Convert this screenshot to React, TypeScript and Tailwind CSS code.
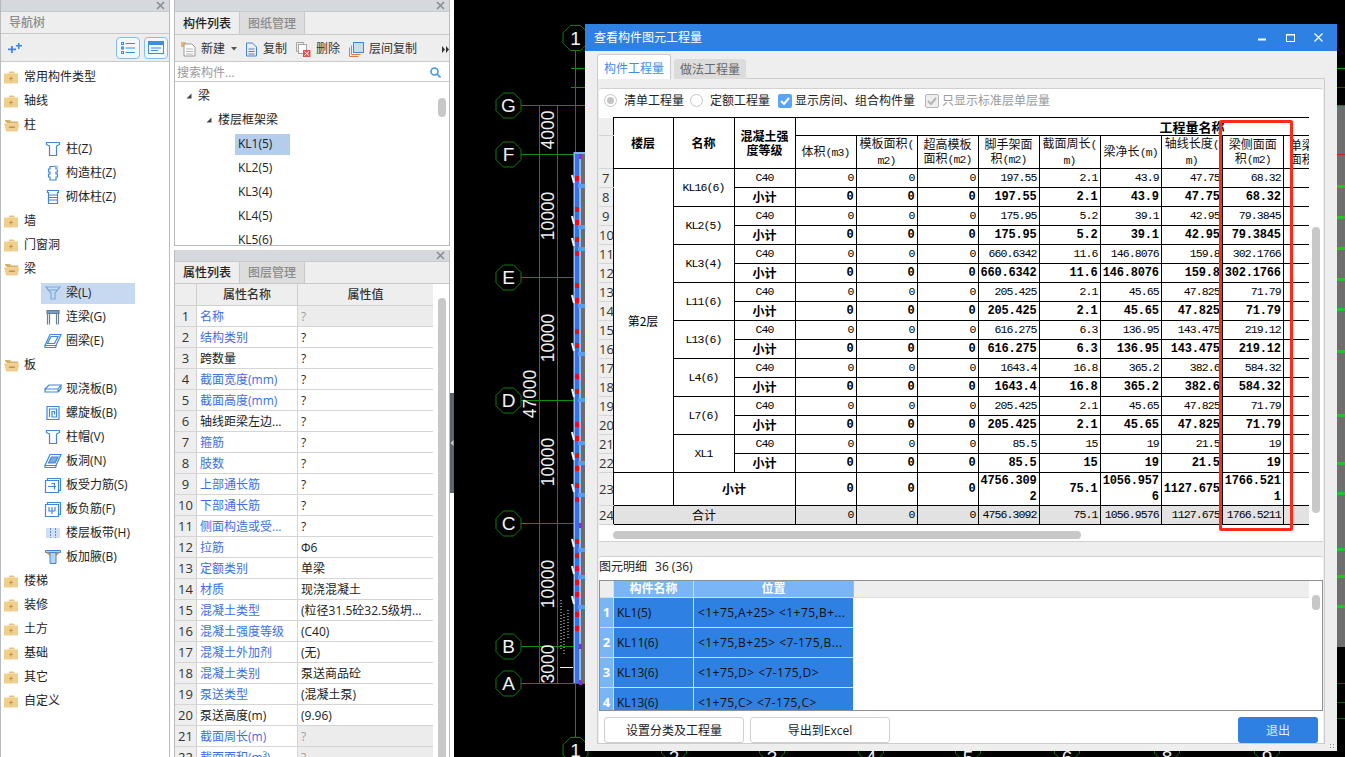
import React from "react";

const BLUE = "#3f86dc";

function Close() {
  return (
    <svg width="9" height="9" viewBox="0 0 9 9" className="shrink-0">
      <path d="M1 1L8 8M8 1L1 8" stroke="#8a8d91" strokeWidth="1.6" />
    </svg>
  );
}

function TitleStrip() {
  return (
    <div className="h-[12px] shrink-0 bg-[#d5d8dc] flex items-center justify-end pr-[4px] border-b border-[#c8cacd]">
      <Close />
    </div>
  );
}

function Folder({ open }: { open?: boolean }) {
  return open ? (
    <svg width="16" height="13" viewBox="0 0 16 13" className="shrink-0">
      <path d="M1 1h5l1 1.5h7v2H3L1 2z" fill="#d4b06a" />
      <path d="M0 4.5h15.5L13.5 12.5H2z" fill="#f0cf8c" />
      <rect x="5" y="7.5" width="6" height="1.4" fill="#b8924a" />
    </svg>
  ) : (
    <svg width="14" height="13" viewBox="0 0 14 13" className="shrink-0">
      <path d="M5 0.5h5l1 2H5z" fill="#e8c47e" />
      <rect x="0" y="2.5" width="14" height="10" fill="#f0cf8c" />
      <path d="M5 7.5h4M7 5.5v4" stroke="#c4984c" strokeWidth="1.2" />
    </svg>
  );
}

function Ico({ children }: { children: React.ReactNode }) {
  return (
    <svg width="18" height="16" viewBox="0 0 18 16" fill="none" stroke={BLUE} strokeWidth="1.2" className="shrink-0">
      {children}
    </svg>
  );
}

const TreeIcons: Record<string, React.ReactNode> = {
  column: (
    <Ico>
      <path d="M2.5 1.5h13v2l-3 1.5v9.5h-7V5l-3-1.5z" />
    </Ico>
  ),
  gz: (
    <Ico>
      <path d="M6 1.5h6v2.5h1.5v3H12v2h1.5v3H12v3H6v-3H4.5v-3H6v-2H4.5v-3H6z" />
      <path d="M10 1h3.5v4" stroke="#b5cdea" />
    </Ico>
  ),
  brick: (
    <Ico>
      <path d="M3.5 1.5h11v2h-1v11h-9v-11h-1z" />
      <path d="M5 6h8M5 8.5h8M5 11h8" />
    </Ico>
  ),
  beam: (
    <Ico>
      <path d="M2 2h14L11 8v6H7V8z" stroke="#7fa9dc" />
      <path d="M5 5h8" stroke="#7fa9dc" />
    </Ico>
  ),
  lintel: (
    <Ico>
      <path d="M3 1.5h12v3H3z" fill="#6f9ad0" stroke="#6e7f94" />
      <path d="M3.5 4.5v11M14.5 4.5v11M5.5 4.5v11M12.5 4.5v11" stroke="#6e7f94" />
    </Ico>
  ),
  ring: (
    <Ico>
      <path d="M6 1.5h11l-5 11H1z" />
      <path d="M1 12.5v2h10.5l1-2" />
      <path d="M7 3.5h7l-3.5 7H3.5z" />
    </Ico>
  ),
  slab: (
    <Ico>
      <path d="M1 8l4-4h12l-3 4H1zM1 8v3h13v-3M14 11l3-3.5V4" />
    </Ico>
  ),
  spiral: (
    <Ico>
      <path d="M3 1.5h12v13H3zM5.5 12V4H12.5v8H8V6.5h2.5v3" />
    </Ico>
  ),
  hole: (
    <Ico>
      <path d="M6 1.5h11l-5 11H1z" />
      <path d="M1 12.5v2h10.5l1-2" />
      <path d="M7.5 4h6.5l-3 6H4.5z" fill="#7fa9dc" />
    </Ico>
  ),
  rebar: (
    <Ico>
      <path d="M1.5 3.5h13v12h-13zM3.5 3.5v-2h13v12h-2" />
      <path d="M4 9.5h8M7.5 6.5h3v6" />
    </Ico>
  ),
  neg: (
    <Ico>
      <path d="M1.5 3.5h13v12h-13zM3.5 3.5v-2h13v12h-2" />
      <path d="M5 6v4h6M8 6v7M11 6v4" />
    </Ico>
  ),
  band: (
    <svg width="18" height="16" viewBox="0 0 18 16" className="shrink-0">
      <rect x="2" y="3" width="14" height="10" fill="#cfe0f4" />
      <path d="M6.5 3v10M11.5 3v10" stroke="#5d8fcf" strokeDasharray="2 1" />
    </svg>
  ),
  haunch: (
    <svg width="18" height="16" viewBox="0 0 18 16" className="shrink-0" fill="none">
      <path d="M1.5 1.5h15v2H1.5z" fill="#b9d2ee" stroke={BLUE} />
      <path d="M2 3.5h4L6 7z M16 3.5h-4L12 7z" fill="#f08a24" />
      <path d="M6 3.5h6v11H6z" fill="#b9d2ee" stroke={BLUE} />
    </svg>
  ),
};

type TreeRow = { t: string; open?: boolean; icon?: string; sel?: boolean };
const tree: TreeRow[] = [
  { t: "常用构件类型" },
  { t: "轴线" },
  { t: "柱", open: true },
  { t: "柱(Z)", icon: "column" },
  { t: "构造柱(Z)", icon: "gz" },
  { t: "砌体柱(Z)", icon: "brick" },
  { t: "墙" },
  { t: "门窗洞" },
  { t: "梁", open: true },
  { t: "梁(L)", icon: "beam", sel: true },
  { t: "连梁(G)", icon: "lintel" },
  { t: "圈梁(E)", icon: "ring" },
  { t: "板", open: true },
  { t: "现浇板(B)", icon: "slab" },
  { t: "螺旋板(B)", icon: "spiral" },
  { t: "柱帽(V)", icon: "column" },
  { t: "板洞(N)", icon: "hole" },
  { t: "板受力筋(S)", icon: "rebar" },
  { t: "板负筋(F)", icon: "neg" },
  { t: "楼层板带(H)", icon: "band" },
  { t: "板加腋(B)", icon: "haunch" },
  { t: "楼梯" },
  { t: "装修" },
  { t: "土方" },
  { t: "基础" },
  { t: "其它" },
  { t: "自定义" },
];

function NavPanel() {
  return (
    <div className="w-[170px] shrink-0 h-full flex flex-col border-x border-[#b9bbbe] bg-white">
      <TitleStrip />
      <div className="h-[22px] shrink-0 bg-[#eeeeee] border-b border-[#c9c9c9] pl-[8px] flex items-center text-[#8c8c8c] font-medium">导航树</div>
      <div className="h-[28px] shrink-0 bg-[#eeeeee] border-b border-[#c9c9c9] flex items-center pl-[7px] pr-[1px]">
        <svg width="14" height="11" viewBox="0 0 14 11" fill={BLUE}>
          <path d="M0 6.5h3V4h1.8v2.5H8v1.8H4.8V11H3V8.3H0z" />
          <path d="M8 3h2V1h1.5v2H14v1.5h-2.5V7H10V4.5H8z" />
        </svg>
        <div className="flex-1" />
        <div className="w-[24px] h-[22px] rounded-[4px] border border-[#7fbdf2] bg-[#f2f8fe] flex items-center justify-center mr-[4px]">
          <svg width="14" height="12" viewBox="0 0 14 12" fill="none" stroke="#3f8ede">
            <path d="M4.5 1.5H14M4.5 6H14M4.5 10.5H14" />
            <rect x="0.5" y="0.5" width="2" height="2" />
            <rect x="0.5" y="5" width="2" height="2" />
            <rect x="0.5" y="9.5" width="2" height="2" />
          </svg>
        </div>
        <div className="w-[24px] h-[22px] rounded-[4px] border border-[#7fbdf2] bg-[#f2f8fe] flex items-center justify-center">
          <svg width="16" height="13" viewBox="0 0 16 13" fill="none">
            <rect x="0.5" y="0.5" width="15" height="12" stroke="#3f8ede" />
            <rect x="0.5" y="0.5" width="15" height="3.5" fill="#3f8ede" />
            <path d="M3 7h10M3 9.5h7" stroke="#3f8ede" />
          </svg>
        </div>
      </div>
      <div className="flex flex-col pt-[3px]">
        {tree.map((r) => (
          <div key={r.t} className="h-[24px] shrink-0 flex items-center text-[#222]">
            {r.icon ? (
              <div className={`ml-[40px] w-[94px] h-[21px] flex items-center pl-[3px] ${r.sel ? "bg-[#c6d9f1]" : ""}`}>
                {TreeIcons[r.icon]}
                <span className="ml-[4px] whitespace-nowrap">{r.t}</span>
              </div>
            ) : (
              <>
                <div className="w-[22px] pl-[3px] flex justify-start">
                  <Folder open={r.open} />
                </div>
                <span className="ml-[1px] whitespace-nowrap">{r.t}</span>
              </>
            )}
          </div>
        ))}
      </div>
    </div>
  );
}

function Tab({ active, children }: { active?: boolean; children: React.ReactNode }) {
  return (
    <div className={`h-full flex items-center justify-center border-r border-[#c9c9c9] font-medium pt-[1px] ${active ? "w-[65px] bg-[#eeeeee] text-[#222]" : "w-[65px] bg-[#dddddd] text-[#8c8c8c]"}`}>
      {children}
    </div>
  );
}

function Caret() {
  return (
    <svg width="6" height="6" viewBox="0 0 6 6" className="shrink-0">
      <path d="M5.5 0.5V5.5H0.5z" fill="#444" />
    </svg>
  );
}

function ComponentList() {
  const items = ["KL1(5)", "KL2(5)", "KL3(4)", "KL4(5)", "KL5(6)"];
  return (
    <div className="h-[246px] shrink-0 border-x border-b border-[#b9bbbe] bg-white flex flex-col overflow-hidden">
      <TitleStrip />
      <div className="h-[23px] shrink-0 bg-[#eeeeee] border-b border-[#c9c9c9] flex">
        <Tab active>构件列表</Tab>
        <Tab>图纸管理</Tab>
      </div>
      <div className="h-[27px] shrink-0 bg-[#eeeeee] border-b border-[#c9c9c9] flex items-center pl-[6px] pt-[2px] text-[#333] whitespace-nowrap">
        <svg width="15" height="15" viewBox="0 0 15 15" className="shrink-0">
          <rect x="0" y="0" width="5" height="5" fill="#f3a14a" opacity="0.8" />
          <path d="M3 2h8l3 3v9H3z" fill="#fff" stroke="#9a9a9a" />
          <path d="M5 7h7M5 9.5h7M5 12h7" stroke="#b5b5b5" />
        </svg>
        <span className="ml-[5px] shrink-0">新建</span>
        <svg width="6" height="4" viewBox="0 0 6 4" className="ml-[6px] shrink-0">
          <path d="M0 0h6L3 3.5z" fill="#555" />
        </svg>
        <svg width="13" height="15" viewBox="0 0 13 15" fill="none" stroke={BLUE} className="ml-[8px] shrink-0">
          <path d="M1.5 1h6l4 4v9h-10zM3.5 7h6M3.5 9.5h6M3.5 12h6" />
        </svg>
        <span className="ml-[5px] shrink-0">复制</span>
        <svg width="15" height="15" viewBox="0 0 15 15" className="ml-[9px] shrink-0">
          <path d="M0.5 0.5h7v3M0.5 0.5v9h2" fill="none" stroke="#a5a5a5" />
          <rect x="2.5" y="2.5" width="8" height="9" fill="#fff" stroke="#a5a5a5" />
          <rect x="7" y="8" width="7.5" height="7" fill="#d9534f" />
          <path d="M8.5 9.5l4.5 4M13 9.5l-4.5 4" stroke="#fff" />
        </svg>
        <span className="ml-[5px] shrink-0">删除</span>
        <svg width="15" height="15" viewBox="0 0 15 15" className="ml-[9px] shrink-0" fill="none">
          <rect x="4.5" y="0.5" width="10" height="10" fill="#c8dcf4" stroke={BLUE} />
          <path d="M2.5 3.5v9h9M0.5 5.5v9h9" stroke="#e07b39" />
        </svg>
        <span className="ml-[5px] shrink-0">层间复制</span>
        <svg width="7" height="7" viewBox="0 0 7 7" className="ml-[25px] shrink-0" fill="#333">
          <path d="M0 0l3 3.5L0 7zM4 0l3 3.5L4 7z" />
        </svg>
      </div>
      <div className="h-[20px] shrink-0 border-b border-[#c9c9c9] flex items-center pl-[2px] pr-[8px] text-[#9a9a9a] pt-[2px]">
        <span className="flex-1">搜索构件...</span>
        <svg width="11" height="11" viewBox="0 0 11 11" fill="none" stroke="#3f9be0" strokeWidth="1.6">
          <circle cx="4.5" cy="4.5" r="3.5" />
          <path d="M7 7l3.5 3.5" />
        </svg>
      </div>
      <div className="flex-1 flex min-h-0 text-[#222] overflow-hidden">
        <div className="flex-1 flex flex-col pt-[2px]">
          <div className="h-[24px] shrink-0 flex items-center pl-[11px]">
            <Caret />
            <span className="ml-[6px]">梁</span>
          </div>
          <div className="h-[24px] shrink-0 flex items-center pl-[31px]">
            <Caret />
            <span className="ml-[6px]">楼层框架梁</span>
          </div>
          {items.map((k, i) => (
            <div key={k} className="h-[24px] shrink-0 flex items-center pl-[60px]">
              <span className={`w-[55px] h-[21px] flex items-center pl-[3px] ${i === 0 ? "bg-[#b4cdec]" : ""}`}>{k}</span>
            </div>
          ))}
        </div>
        <div className="w-[11px] pt-[16px]">
          <div className="w-[8px] h-[19px] rounded-full bg-[#c8c8c8]" />
        </div>
      </div>
    </div>
  );
}

const props: [string, string, boolean, boolean?][] = [
  ["名称", "?", true, true],
  ["结构类别", "?", true],
  ["跨数量", "?", false],
  ["截面宽度(mm)", "?", true],
  ["截面高度(mm)", "?", true],
  ["轴线距梁左边...", "?", false],
  ["箍筋", "?", true],
  ["肢数", "?", true],
  ["上部通长筋", "?", true],
  ["下部通长筋", "?", true],
  ["侧面构造或受...", "?", true],
  ["拉筋", "Φ6", true],
  ["定额类别", "单梁", true],
  ["材质", "现浇混凝土", true],
  ["混凝土类型", "(粒径31.5砼32.5级坍...", true],
  ["混凝土强度等级", "(C40)", true],
  ["混凝土外加剂", "(无)", true],
  ["混凝土类别", "泵送商品砼", true],
  ["泵送类型", "(混凝土泵)", true],
  ["泵送高度(m)", "(9.96)", false],
  ["截面周长(m)", "?", true, true],
  ["截面面积(m³)", "?", true, true],
];

function PropPanel() {
  return (
    <div className="flex-1 min-h-0 mt-[4px] border-x border-[#b9bbbe] bg-white flex flex-col overflow-hidden">
      <TitleStrip />
      <div className="h-[22px] shrink-0 bg-[#eeeeee] flex border-b border-[#c9c9c9]">
        <Tab active>属性列表</Tab>
        <Tab>图层管理</Tab>
      </div>
      <div className="flex flex-1 min-h-0 overflow-hidden">
        <div className="w-[258px] shrink-0 flex flex-col">
          <div className="h-[22px] shrink-0 flex bg-[#eeeeee] border-b border-[#d0d0d0] text-[#333] font-medium">
            <div className="w-[22px] border-r border-[#d0d0d0]" />
            <div className="w-[101px] pt-[1px] border-r border-[#d0d0d0] flex items-center justify-center">属性名称</div>
            <div className="flex-1 pt-[1px] flex items-center justify-center">属性值</div>
          </div>
          {props.map(([n, v, blue, gray], i) => (
            <div key={n} className="h-[21px] shrink-0 flex border-b border-[#d5d5d5]">
              <div className="w-[22px] bg-[#eeeeee] border-r border-[#d0d0d0] flex items-center justify-center text-[#333] text-[13px]">{i + 1}</div>
              <div className={`w-[101px] border-r border-[#d5d5d5] pl-[3px] pt-[1px] flex items-center whitespace-nowrap ${blue ? "text-[#3c6fe6]" : "text-[#222]"}`}>{n}</div>
              <div className={`flex-1 pl-[3px] pt-[1px] flex items-center whitespace-nowrap ${gray ? "bg-[#ececec] text-[#a0a0a0]" : "text-[#222]"}`}>{v}</div>
            </div>
          ))}
        </div>
        <div className="w-[5px]" />
        <div className="w-[8px] mt-[14px] rounded-t-full bg-[#c8c8c8]" />
      </div>
    </div>
  );
}

function Cad() {
  const hs: [string, number][] = [
    ["G", 105],
    ["F", 154],
    ["E", 277],
    ["D", 400],
    ["C", 523],
    ["B", 646],
    ["A", 683],
  ];
  const oct = (cx: number, cy: number) => {
    const r = 12.5;
    const k = r * 0.41;
    return `${cx - k},${cy - r} ${cx + k},${cy - r} ${cx + r},${cy - k} ${cx + r},${cy + k} ${cx + k},${cy + r} ${cx - k},${cy + r} ${cx - r},${cy + k} ${cx - r},${cy - k}`;
  };
  const reds = [178, 209, 222, 239, 253, 285, 300, 331, 345, 376, 391, 424, 438, 455, 468, 485, 499, 541, 555, 568, 582, 594, 614, 628];
  const stubs = [184, 225, 247, 304, 352, 398, 441, 461, 493, 548, 575, 605];
  const mag = [154, 523, 644, 680];
  const dims: [string, number, number][] = [
    ["4000", 548, 130],
    ["10000", 548, 216],
    ["10000", 548, 338],
    ["47000", 530, 394],
    ["10000", 548, 462],
    ["10000", 548, 584],
    ["3000", 548, 664],
  ];
  const rightGreen = [185, 216, 247, 278, 308, 350, 414, 462, 492, 548, 575, 605];
  return (
    <svg className="absolute inset-0" width="891" height="757" viewBox="454 0 891 757">
      <rect x="454" y="0" width="891" height="757" fill="#000" />
      <path d="M539.5 105V683M557.5 105V683" stroke="#0b900b" />
      <path d="M575.5 50V152M575.5 683V757" stroke="#0b900b" />
      <path d="M575.5 105V152" stroke="#e01818" />
      {hs.map(([l, y]) => (
        <g key={l}>
          <path d={`M521 ${y + 0.5}H585`} stroke="#0b900b" />
          <polygon points={oct(508.5, y + 0.5)} fill="#000" stroke="#0f7d0f" />
          <text x="508.5" y={y + 7} textAnchor="middle" fontSize="19" fill="#f2f2f2" fontFamily="'Liberation Sans'">{l}</text>
        </g>
      ))}
      <polygon points={oct(575.5, 38)} fill="#000" stroke="#0f7d0f" />
      <text x="575.5" y="45" textAnchor="middle" fontSize="19" fill="#f2f2f2" fontFamily="'Liberation Sans'">1</text>
      <path d="M571 68.5h14M571 87.5h14" stroke="#0b900b" />
      <polygon points={oct(575.5, 750)} fill="#000" stroke="#0f7d0f" />
      <text x="575.5" y="757" textAnchor="middle" fontSize="19" fill="#f2f2f2" fontFamily="'Liberation Sans'">1</text>
      {[
        [674, "2"],
        [772, "3"],
        [871, "4"],
        [968, "5"],
        [1067, "6"],
        [1167, "8"],
        [1267, "9"],
      ].map(([x, n]) => (
        <g key={n as string}>
          <polygon points={oct(x as number, 748)} fill="#000" stroke="#0f7d0f" />
          <text x={x as number} y="764" textAnchor="middle" fontSize="19" fill="#f2f2f2" fontFamily="'Liberation Sans'">{n}</text>
        </g>
      ))}
      {dims.map(([t, x, y], i) => (
        <text key={i} transform={`translate(${x},${y}) rotate(-90)`} y="6" textAnchor="middle" fontSize="17.5" fill="#efefef" fontFamily="'Liberation Sans'">{t}</text>
      ))}
      <rect x="581" y="152" width="4" height="531" fill="#6b6b6b" />
      <rect x="575" y="152" width="4" height="531" fill="#3a6fe8" />
      <rect x="573.5" y="152" width="1.5" height="531" fill="#8fbcf5" />
      <rect x="579" y="152" width="2" height="531" fill="#8fbcf5" />
      <path d="M574 153h11" stroke="#7fb0f0" strokeWidth="2" />
      {stubs.map((y) => (
        <g key={y}>
          <rect x="578" y={y} width="7" height="4" fill="#5b9cf2" />
          <path d={`M572 ${y - 9}l2 8`} stroke="#f2f2f2" strokeWidth="2" />
        </g>
      ))}
      {reds.map((y) => (
        <rect key={y} x="575" y={y - 2} width="4" height="5" fill="#f20d0d" />
      ))}
      {mag.map((y) => (
        <rect key={y} x="579" y={y} width="3" height="5" fill="#a020e0" />
      ))}
      <path d="M561 600v50M564 614v40M568 610v30" stroke="#e8e8e8" strokeDasharray="1 2" />
      <path d="M560 667.5h13" stroke="#f0f0f0" />
      <rect x="1337" y="105" width="8" height="542" fill="#6e6e6e" />
      {rightGreen.map((y) => (
        <rect key={y} x="1337" y={y} width="8" height="3" fill="#22c622" />
      ))}
      <path d="M1337 68.5h8" stroke="#0a9a0a" />
      <path d="M1337 87.5h8" stroke="#075c07" />
      <path d="M1337 105.5h8M1337 154.5h8" stroke="#e01818" />
      <path d="M1337 683.5h8" stroke="#a01010" />
      <path d="M1337 702.5h8M1337 718.5h8" stroke="#075c07" />
    </svg>
  );
}

const N = "border border-black text-right align-middle py-0 pl-0 pr-[2px] whitespace-nowrap overflow-hidden [font-family:'Liberation_Mono','Noto_Sans_CJK_SC',monospace] text-[11.5px] tracking-[-0.9px] leading-[16px]";
const NC = "border border-black text-center align-middle p-0 whitespace-nowrap [font-family:'Liberation_Mono','Noto_Sans_CJK_SC',monospace] text-[11.5px] tracking-[-0.9px] leading-[16px]";
const B = "border border-black text-right align-middle py-0 pl-0 pr-[2px] overflow-hidden [font-family:'Liberation_Mono','Noto_Sans_CJK_SC',monospace] text-[12px] font-bold tracking-[-0.2px] leading-[16px] break-all";
const H = "border border-black text-center align-middle p-0 [font-family:'Noto_Sans_CJK_SC',sans-serif] text-[12px] leading-[14px] text-[#111]";
const HB = "border border-black text-center align-middle p-0 [font-family:'Noto_Sans_CJK_SC',sans-serif] text-[12px] leading-[14px] text-black font-bold";
const RN = "bg-[#eeeeee] border-b border-[#d5d5d5] text-[#333] text-[13px] text-center p-0 leading-none [font-family:'Open_Sans',sans-serif]";
const L = "[font-family:'Liberation_Mono',monospace] text-[11.5px] tracking-[-0.9px]";

const groups: [string, string, string, string, string, string][] = [
  ["KL16(6)", "197.55", "2.1", "43.9", "47.75", "68.32"],
  ["KL2(5)", "175.95", "5.2", "39.1", "42.95", "79.3845"],
  ["KL3(4)", "660.6342", "11.6", "146.8076", "159.8", "302.1766"],
  ["L11(6)", "205.425", "2.1", "45.65", "47.825", "71.79"],
  ["L13(6)", "616.275", "6.3", "136.95", "143.475", "219.12"],
  ["L4(6)", "1643.4", "16.8", "365.2", "382.6", "584.32"],
  ["L7(6)", "205.425", "2.1", "45.65", "47.825", "71.79"],
  ["XL1", "85.5", "15", "19", "21.5", "19"],
];

function QtyTable() {
  const cols = [60, 61, 61, 61, 61, 61, 61, 61, 61, 61, 61, 61];
  return (
    <table className="table-fixed border-collapse w-[746px] text-black">
      <colgroup>
        <col className="w-[14px]" />
        {cols.map((w, i) => (
          <col key={i} style={{ width: w }} />
        ))}
      </colgroup>
      <thead>
        <tr className="h-[18px]">
          <td className={RN} />
          <td rowSpan={2} className={HB}>楼层</td>
          <td rowSpan={2} className={HB}>名称</td>
          <td rowSpan={2} className={HB}>
            混凝土强
            <br />
            度等级
          </td>
          <td colSpan={9} className="border border-black p-0 [font-family:'Noto_Sans_CJK_SC',sans-serif] text-[13px] font-bold leading-none">
            <div className="text-left whitespace-nowrap pl-[364px]">工程量名称</div>
          </td>
        </tr>
        <tr className="h-[33px]">
          <td className={RN} />
          <td className={H}>
            体积<span className={L}>(m3)</span>
          </td>
          <td className={H}>
            模板面积<span className={L}>(</span>
            <br />
            <span className={L}>m2)</span>
          </td>
          <td className={H}>
            超高模板
            <br />
            面积<span className={L}>(m2)</span>
          </td>
          <td className={H}>
            脚手架面
            <br />
            积<span className={L}>(m2)</span>
          </td>
          <td className={H}>
            截面周长<span className={L}>(</span>
            <br />
            <span className={L}>m)</span>
          </td>
          <td className={H}>
            梁净长<span className={L}>(m)</span>
          </td>
          <td className={H}>
            轴线长度<span className={L}>(</span>
            <br />
            <span className={L}>m)</span>
          </td>
          <td className={H}>
            梁侧面面
            <br />
            积<span className={L}>(m2)</span>
          </td>
          <td className={H}>
            <div className="w-[60px] whitespace-nowrap text-left pl-[6px]">
              单梁模板
              <br />
              面积
            </div>
          </td>
        </tr>
      </thead>
      <tbody>
        {groups.map((g, i) => {
          const vals = ["0", "0", "0", g[1], g[2], g[3], g[4], g[5]];
          return (
            <React.Fragment key={g[0]}>
              <tr className="h-[19px]">
                <td className={RN}>{7 + i * 2}</td>
                {i === 0 && (
                  <td rowSpan={16} className="border border-black p-0 text-center text-[12px] [font-family:'Noto_Sans_CJK_SC',sans-serif]">第2层</td>
                )}
                <td rowSpan={2} className={NC}>{g[0]}</td>
                <td className={NC}>C40</td>
                {vals.map((v, j) => (
                  <td key={j} className={N}>{v}</td>
                ))}
                <td className={N} />
              </tr>
              <tr className="h-[19px]">
                <td className={RN}>{8 + i * 2}</td>
                <td className={HB}>小计</td>
                {vals.map((v, j) => (
                  <td key={j} className={B}>{v}</td>
                ))}
                <td className={B} />
              </tr>
            </React.Fragment>
          );
        })}
        <tr className="h-[33px]">
          <td className={RN}>23</td>
          <td className="border border-black p-0" />
          <td colSpan={2} className={HB}>小计</td>
          {["0", "0", "0", "4756.3092", "75.1", "1056.9576", "1127.675", "1766.5211", ""].map((v, j) => (
            <td key={j} className={B}>{v}</td>
          ))}
        </tr>
        <tr className="h-[19px] bg-[#e2e2e2]">
          <td className={RN}>24</td>
          <td colSpan={3} className="border border-black p-0 text-center text-[12px] [font-family:'Noto_Sans_CJK_SC',sans-serif]">合计</td>
          {["0", "0", "0", "4756.3092", "75.1", "1056.9576", "1127.675", "1766.5211", ""].map((v, j) => (
            <td key={j} className={N}>{v}</td>
          ))}
        </tr>
      </tbody>
    </table>
  );
}

function Radio({ on }: { on?: boolean }) {
  return (
    <span className="w-[13px] h-[13px] rounded-full border border-[#c4c4c4] bg-white flex items-center justify-center shrink-0">
      {on && <span className="w-[7px] h-[7px] rounded-full bg-[#c4c4c4]" />}
    </span>
  );
}

function Check({ dis }: { dis?: boolean }) {
  return (
    <span className={`w-[14px] h-[14px] rounded-[2px] flex items-center justify-center shrink-0 ${dis ? "border border-[#b5b5b5] bg-[#eeeeee]" : "bg-[#5aa5f5]"}`}>
      <svg width="10" height="8" viewBox="0 0 10 8" fill="none" stroke={dis ? "#b5b5b5" : "#fff"} strokeWidth="2">
        <path d="M1 4l3 3 5-6" />
      </svg>
    </span>
  );
}

const rows2: [string, string][] = [
  ["KL1(5)", "<1+75,A+25> <1+75,B+..."],
  ["KL11(6)", "<1+75,B+25> <7-175,B..."],
  ["KL13(6)", "<1+75,D> <7-175,D>"],
  ["KL13(6)", "<1+75,C> <7-175,C>"],
];

function Dialog() {
  return (
    <div className="absolute left-[131px] top-[24px] w-[752px] h-[727px] bg-[#eeeeee] flex flex-col">
      <div className="h-[27px] shrink-0 bg-[#2e80e2] flex items-center pl-[9px] pr-[14px] text-white text-[12px]">
        <span className="flex-1">查看构件图元工程量</span>
        <svg width="8" height="3" viewBox="0 0 8 3" className="mr-[20px] mt-[4px]">
          <rect width="8" height="2" y="0.5" fill="#fff" />
        </svg>
        <svg width="9" height="8" viewBox="0 0 9 8" className="mr-[19px]" fill="none" stroke="#fff">
          <rect x="0.5" y="0.5" width="8" height="7" />
          <path d="M0 1h9" />
        </svg>
        <svg width="9" height="9" viewBox="0 0 9 9" fill="none" stroke="#fff" strokeWidth="1.2">
          <path d="M0.5 0.5l8 8M8.5 0.5l-8 8" />
        </svg>
      </div>
      <div className="h-[28px] shrink-0 flex items-end pl-[12px]">
        <div className="w-[74px] h-[25px] pt-[3px] bg-white border border-b-0 border-[#cccccc] rounded-t-[3px] flex items-center justify-center text-[#3d8de8]">构件工程量</div>
        <div className="w-[72px] h-[20px] pt-[1px] ml-[3px] bg-[#dcdcdc] rounded-t-[3px] flex items-center justify-center text-[#666]">做法工程量</div>
        <div className="flex-1 border-b border-[#cccccc] mr-[12px]" />
      </div>
      <div className="h-[665px] shrink-0 ml-[12px] mr-[12px] border-x border-b border-[#cccccc] flex flex-col pt-[9px] pl-[1px] pr-[1px]">
        <div className="h-[454px] shrink-0 bg-white rounded-t-[3px] border-t border-[#d0d0d0] border-b flex flex-col">
          <div className="h-[28px] shrink-0 flex items-center pb-[5px] pl-[5px] text-[#222]">
            <Radio on />
            <span className="ml-[7px]">清单工程量</span>
            <span className="ml-[6px]" />
            <Radio />
            <span className="ml-[7px]">定额工程量</span>
            <span className="ml-[8px]" />
            <Check />
            <span className="ml-[3px]">显示房间、组合构件量</span>
            <span className="ml-[10px]" />
            <Check dis />
            <span className="ml-[3px] text-[#9a9a9a]">只显示标准层单层量</span>
          </div>
          <div className="flex flex-1 min-h-0">
            <div className="w-[710px] shrink-0 flex flex-col">
              <div className="h-[408px] shrink-0 overflow-hidden">
                <QtyTable />
              </div>
              <div className="h-[8px] mt-[6px] ml-[14px] w-[468px] rounded-full bg-[#c8c8c8]" />
            </div>
            <div className="w-[8px] h-[286px] mt-[110px] ml-[3px] rounded-full bg-[#c8c8c8]" />
          </div>
        </div>
        <div className="h-[14px] shrink-0" />
        <div className="h-[155px] shrink-0 bg-white rounded-t-[3px] border-t border-[#d0d0d0] flex flex-col">
          <div className="h-[23px] shrink-0 flex items-center pb-[3px] text-[#222]">
            <span>图元明细</span>
            <span className="ml-[8px]">36 (36)</span>
          </div>
          <div className="h-[131px] shrink-0 border border-[#8c8f94] overflow-hidden flex">
            <div className="w-[709px] shrink-0 flex flex-col">
              <div className="h-[17px] shrink-0 flex bg-[#eeeeee] border-b border-[#dedede]">
                <div className="w-[14px] border-r border-[#dedede]" />
                <div className="w-[80px] bg-[#7ab5f5] border-r border-[#dedede] flex items-center justify-center text-white font-bold">构件名称</div>
                <div className="w-[160px] bg-[#7ab5f5] border-r border-[#b8b8b8] flex items-center justify-center text-white font-bold">位置</div>
              </div>
              {rows2.map(([a, b], i) => (
                <div key={i} className="h-[30px] shrink-0 flex">
                  <div className="w-[14px] bg-[#7ab5f5] border-r border-b border-[#dedede] text-white font-bold flex items-center justify-center text-[13px]">{i + 1}</div>
                  <div className="w-[80px] bg-[#2e80e2] border-r border-b border-[#dedede] flex items-center pl-[3px] text-[#111]">{a}</div>
                  <div className="w-[159px] bg-[#2e80e2] border-b border-[#dedede] flex items-center pl-[4px] text-[#111] whitespace-nowrap tracking-[0.45px]">{b}</div>
                </div>
              ))}
            </div>
            <div className="w-[8px] h-[15px] mt-[14px] ml-[3px] rounded-full bg-[#c8c8c8]" />
          </div>
        </div>
        <div className="flex-1 bg-white flex items-end pl-[5px] pr-[5px]">
          <button className="w-[140px] h-[26px] pt-[1px] bg-white border border-[#d0d0d0] rounded-[3px] text-[#222]">设置分类及工程量</button>
          <button className="w-[140px] h-[26px] pt-[1px] ml-[6px] bg-white border border-[#d0d0d0] rounded-[3px] text-[#222]">导出到Excel</button>
          <div className="flex-1" />
          <button className="w-[80px] h-[26px] pt-[1px] bg-[#2e80e2] rounded-[3px] text-[#dfeeff]">退出</button>
        </div>
      </div>
      <div className="absolute right-[1px] bottom-[1px] w-[7px] h-[7px] bg-[radial-gradient(#888_1px,transparent_1px)] bg-[length:3px_3px]" />
      <div className="absolute left-[634px] top-[96px] w-[74px] h-[411px] border-[3px] border-[#ff2a18] rounded-[2px]" />
    </div>
  );
}

export default function App() {
  return (
    <div className="w-[1345px] h-[757px] overflow-hidden flex bg-white text-[12px] leading-none [font-family:'Open_Sans','Noto_Sans_CJK_SC',sans-serif]">
      <NavPanel />
      <div className="w-[4px] shrink-0" />
      <div className="w-[276px] shrink-0 h-full flex flex-col">
        <ComponentList />
        <PropPanel />
      </div>
      <div className="w-[4px] shrink-0 flex flex-col pt-[393px]">
        <div className="h-[100px] bg-[#5b6570] flex items-center">
          <svg width="4" height="6" viewBox="0 0 4 6">
            <path d="M3.5 0L0.5 3l3 3z" fill="#c8ccd0" />
          </svg>
        </div>
      </div>
      <div className="relative flex-1 h-full overflow-hidden">
        <Cad />
        <Dialog />
      </div>
    </div>
  );
}
